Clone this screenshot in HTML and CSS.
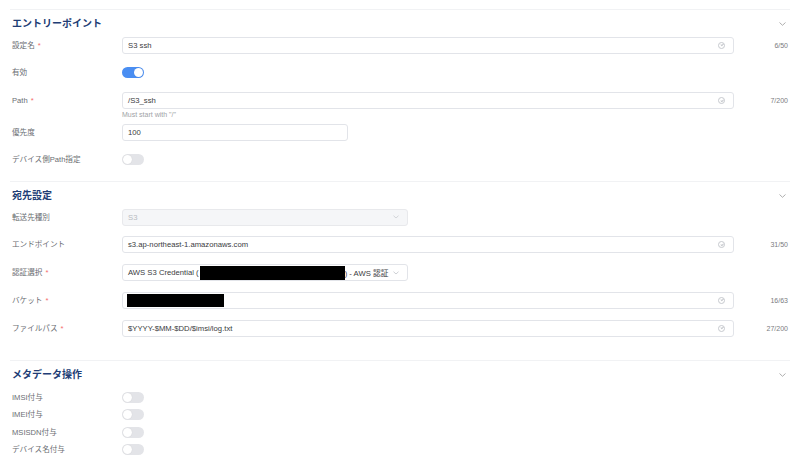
FILE: index.html
```html
<!DOCTYPE html>
<html lang="ja">
<head>
  <meta charset="UTF-8">
  <meta name="viewport" content="width=device-width, initial-scale=1.0">
  <title>エントリーポイント設定</title>
  <link rel="stylesheet" href="styles.css">
</head>
<body>
  <div class="page">

    <section class="panel panel-entry">
      <div class="panel-head">
        <h2>エントリーポイント</h2>
        <svg class="chevron" width="7" height="4" viewBox="0 0 7 4"><path d="M0.5 0.5 L3.5 3.3 L6.5 0.5" fill="none" stroke="#9a9a9a" stroke-width="0.8"/></svg>
      </div>

      <div class="field">
        <label class="field-label">設定名<span class="req">*</span></label>
        <div class="input"><span class="value">S3 ssh</span><span class="check"></span></div>
        <span class="count">6/50</span>
      </div>

      <div class="field">
        <label class="field-label">有効</label>
        <div class="control"><span class="switch on"></span></div>
      </div>

      <div class="field has-hint">
        <label class="field-label">Path<span class="req">*</span></label>
        <div class="control">
          <div class="input"><span class="value">/S3_ssh</span><span class="check"></span></div>
          <div class="hint">Must start with "/"</div>
        </div>
        <span class="count">7/200</span>
      </div>

      <div class="field">
        <label class="field-label">優先度</label>
        <div class="control"><div class="input input-short"><span class="value">100</span></div></div>
      </div>

      <div class="field">
        <label class="field-label">デバイス側Path指定</label>
        <div class="control"><span class="switch"></span></div>
      </div>
    </section>

    <section class="panel panel-dest">
      <div class="panel-head">
        <h2>宛先設定</h2>
        <svg class="chevron" width="7" height="4" viewBox="0 0 7 4"><path d="M0.5 0.5 L3.5 3.3 L6.5 0.5" fill="none" stroke="#9a9a9a" stroke-width="0.8"/></svg>
      </div>

      <div class="field">
        <label class="field-label">転送先種別</label>
        <div class="control">
          <div class="select disabled"><span class="value">S3</span>
            <svg width="6" height="4" viewBox="0 0 6 4"><path d="M0.5 0.7 L3 3 L5.5 0.7" fill="none" stroke="#c4c7cc" stroke-width="0.7"/></svg>
          </div>
        </div>
      </div>

      <div class="field">
        <label class="field-label">エンドポイント</label>
        <div class="input"><span class="value">s3.ap-northeast-1.amazonaws.com</span><span class="check"></span></div>
        <span class="count">31/50</span>
      </div>

      <div class="field">
        <label class="field-label">認証選択<span class="req">*</span></label>
        <div class="control">
          <div class="select"><span class="value">AWS S3 Credential (<span class="redact redact-cred"></span>) - AWS 認証</span>
            <svg width="6" height="4" viewBox="0 0 6 4"><path d="M0.5 0.7 L3 3 L5.5 0.7" fill="none" stroke="#b8bcc2" stroke-width="0.7"/></svg>
          </div>
        </div>
      </div>

      <div class="field">
        <label class="field-label">バケット<span class="req">*</span></label>
        <div class="input"><span class="value"><span class="redact redact-bucket"></span></span><span class="check"></span></div>
        <span class="count">16/63</span>
      </div>

      <div class="field">
        <label class="field-label">ファイルパス<span class="req">*</span></label>
        <div class="input"><span class="value">$YYYY-$MM-$DD/$imsi/log.txt</span><span class="check"></span></div>
        <span class="count">27/200</span>
      </div>
    </section>

    <section class="panel panel-meta">
      <div class="panel-head">
        <h2>メタデータ操作</h2>
        <svg class="chevron" width="7" height="4" viewBox="0 0 7 4"><path d="M0.5 0.5 L3.5 3.3 L6.5 0.5" fill="none" stroke="#9a9a9a" stroke-width="0.8"/></svg>
      </div>

      <div class="field compact">
        <label class="field-label">IMSI付与</label>
        <div class="control"><span class="switch"></span></div>
      </div>
      <div class="field compact">
        <label class="field-label">IMEI付与</label>
        <div class="control"><span class="switch"></span></div>
      </div>
      <div class="field compact">
        <label class="field-label">MSISDN付与</label>
        <div class="control"><span class="switch"></span></div>
      </div>
      <div class="field compact">
        <label class="field-label">デバイス名付与</label>
        <div class="control"><span class="switch"></span></div>
      </div>
    </section>

  </div>
</body>
</html>
```

FILE: styles.css
```css
:root {
  --title: #213d75;
  --label: #6a6d72;
  --text: #3a3b3e;
  --muted: #a0a2a6;
  --border: #e2e4e9;
  --line: #f1f2f4;
  --blue: #4a8ef2;
  --req: #f56c6c;
  --font: "Liberation Sans", "Noto Sans CJK JP", sans-serif;
}

body {
  margin: 0;
  background: #ffffff;
  font-family: var(--font);
  color: var(--text);
}

.page {
  padding: 9px 10px 0;
}

.panel {
  border-top: 1px solid var(--line);
  padding: 0 2px 2px;
}

.panel-dest {
  padding-bottom: 12.75px;
}

.panel-head {
  display: flex;
  justify-content: space-between;
  align-items: center;
  padding-top: 7px;
  margin-bottom: 5.5px;
}

.panel-head h2 {
  margin: 0;
  font-size: 10px;
  line-height: 14px;
  font-weight: 700;
  color: var(--title);
}

.chevron {
  margin-right: 2px;
}

.field {
  display: grid;
  grid-template-columns: 110px 612px 1fr;
  align-items: start;
  min-height: 17px;
  margin-bottom: 10.75px;
}

.field.has-hint {
  margin-bottom: 2.5px;
}

.field.compact {
  min-height: 17.5px;
  margin-bottom: 0;
  align-items: center;
}

.panel-meta .panel-head {
  margin-bottom: 6.5px;
}

.field-label {
  font-size: 7.6px;
  line-height: 17px;
  color: var(--label);
}

.compact .field-label {
  line-height: 17.5px;
}

.req {
  color: var(--req);
  margin-left: 3px;
}

.control {
  display: flex;
  flex-direction: column;
  align-items: flex-start;
  min-height: 17px;
  justify-content: center;
}

.input,
.select {
  box-sizing: border-box;
  height: 17px;
  border: 1px solid var(--border);
  border-radius: 3px;
  display: flex;
  align-items: center;
  justify-content: space-between;
  padding: 0 8px 0 5px;
  font-size: 7.7px;
  color: var(--text);
  background: #ffffff;
}

.control .input {
  width: 100%;
}

.input-short {
  width: 226px !important;
}

.value {
  display: flex;
  align-items: center;
  white-space: nowrap;
}

.check {
  width: 5px;
  height: 5px;
  border: 0.8px solid #c6c9ce;
  border-radius: 50%;
  position: relative;
}

.check::after {
  content: "";
  position: absolute;
  left: 1.6px;
  top: 0.6px;
  width: 1.2px;
  height: 2.4px;
  border: solid #c6c9ce;
  border-width: 0 0.8px 0.8px 0;
  transform: rotate(45deg);
}

.select {
  width: 286px;
}

.select.disabled {
  background: #f5f6f8;
  border-color: #e8e9ec;
  color: #b8bbc1;
}

.redact {
  display: inline-block;
  background: #000000;
}

.redact-cred {
  width: 145px;
  height: 14px;
  margin-left: 1px;
}

.redact-bucket {
  width: 97px;
  height: 13px;
  margin-left: -1px;
}

.hint {
  font-size: 7px;
  line-height: 12px;
  color: var(--muted);
}

.count {
  font-size: 7px;
  line-height: 17px;
  color: #7a7c80;
  text-align: right;
}

.switch {
  display: inline-block;
  width: 22px;
  height: 11px;
  border-radius: 6px;
  background: #e3e4e8;
  position: relative;
}

.switch::after {
  content: "";
  position: absolute;
  top: 1px;
  left: 1px;
  width: 9px;
  height: 9px;
  border-radius: 50%;
  background: #ffffff;
  box-shadow: 0 0 1px rgba(0, 0, 0, 0.15);
}

.switch.on {
  background: var(--blue);
}

.switch.on::after {
  left: 12px;
}
```
